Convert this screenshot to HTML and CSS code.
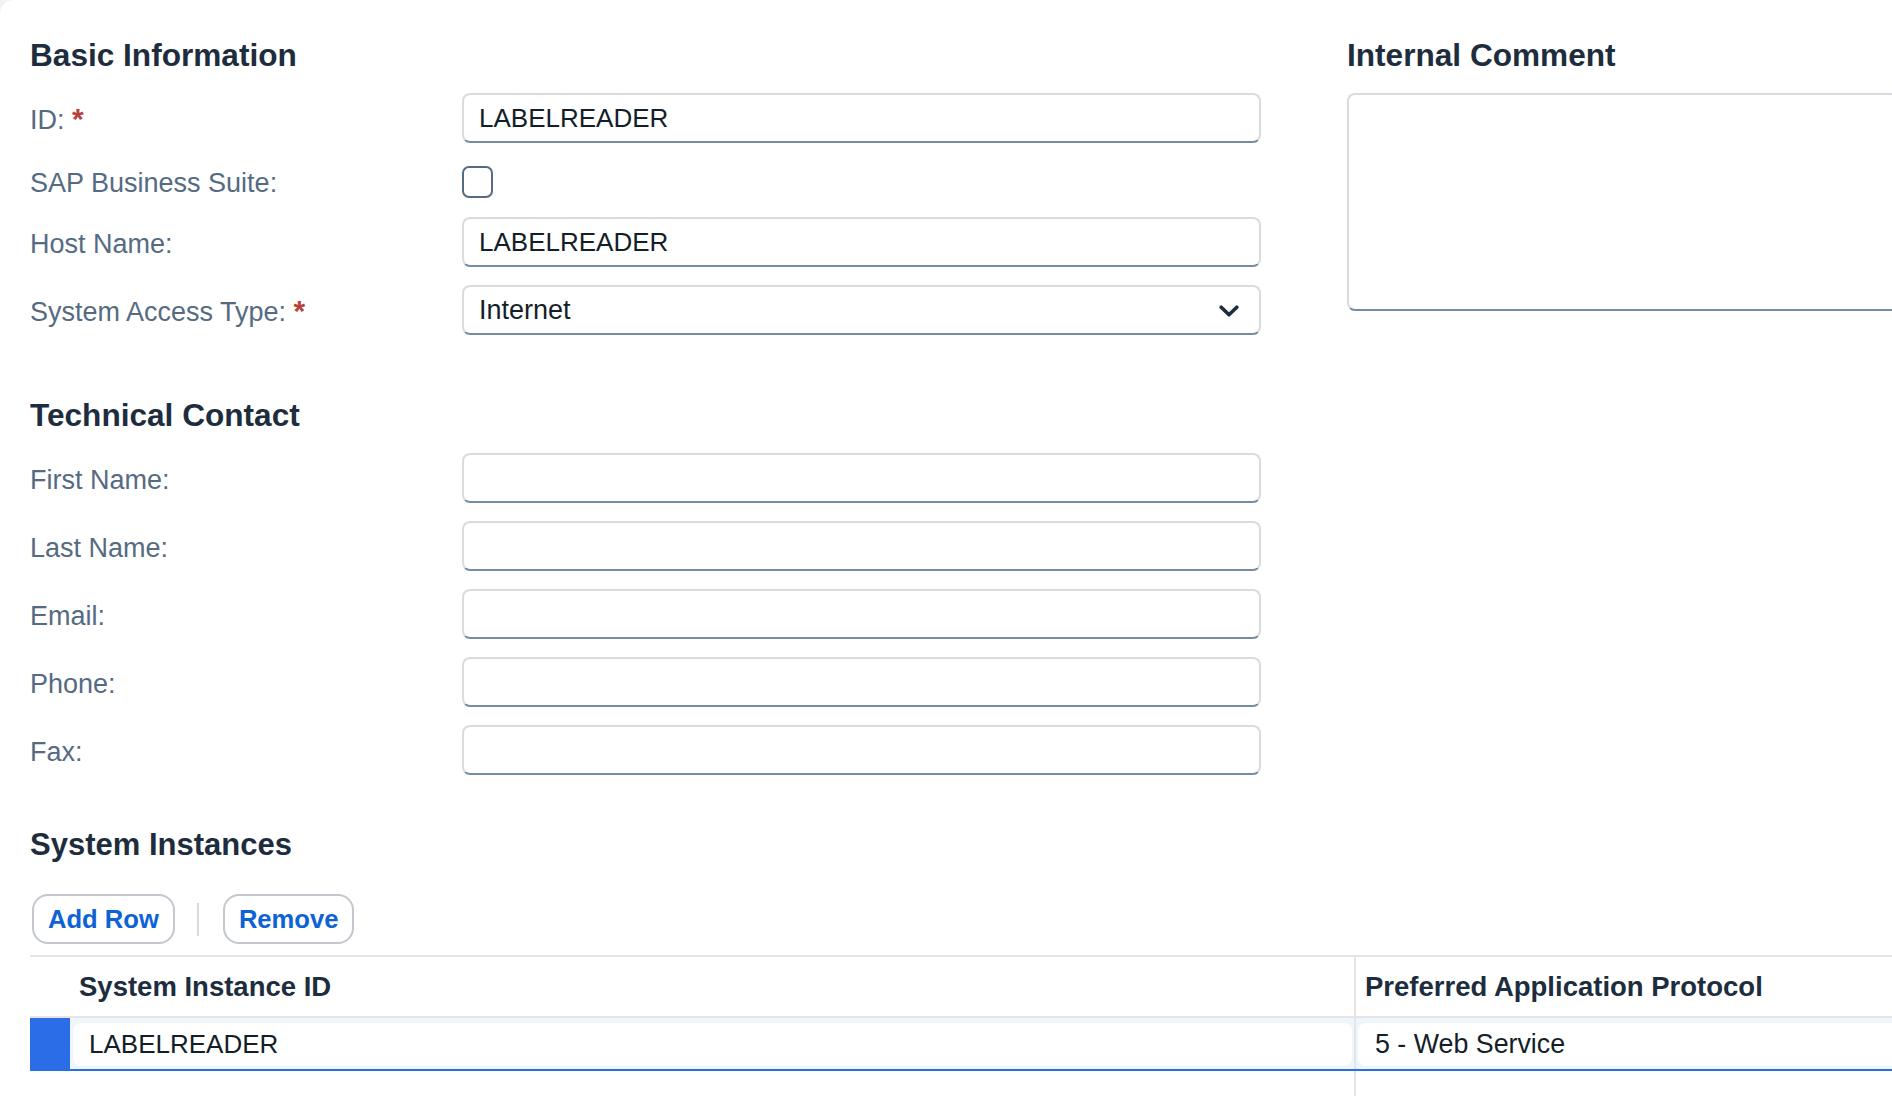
FILE: index.html
```html
<!DOCTYPE html>
<html lang="en">
<head>
<meta charset="utf-8">
<title>System Details</title>
<link rel="stylesheet" href="styles.css">
</head>
<body>
<div class="page">
  <div class="top">
    <div class="left">
      <section class="section">
        <h2 class="title">Basic Information</h2>
        <div class="fields">
          <div class="row">
            <label class="label">ID: <span class="req">*</span></label>
            <div class="input">LABELREADER</div>
          </div>
          <div class="row row-check">
            <label class="label">SAP Business Suite:</label>
            <div class="checkbox"></div>
          </div>
          <div class="row">
            <label class="label">Host Name:</label>
            <div class="input">LABELREADER</div>
          </div>
          <div class="row">
            <label class="label">System Access Type: <span class="req">*</span></label>
            <div class="input select">
              <span>Internet</span>
              <svg class="chevron" width="20" height="12" viewBox="0 0 20 12" aria-hidden="true"><path d="M2.2 2.2 L10 9.8 L17.8 2.2" fill="none" stroke="#1d2d3e" stroke-width="3.6" stroke-linecap="round" stroke-linejoin="round"/></svg>
            </div>
          </div>
        </div>
      </section>

      <section class="section section-tech">
        <h2 class="title">Technical Contact</h2>
        <div class="fields">
          <div class="row"><label class="label">First Name:</label><div class="input"></div></div>
          <div class="row"><label class="label">Last Name:</label><div class="input"></div></div>
          <div class="row"><label class="label">Email:</label><div class="input"></div></div>
          <div class="row"><label class="label">Phone:</label><div class="input"></div></div>
          <div class="row"><label class="label">Fax:</label><div class="input"></div></div>
        </div>
      </section>
    </div>

    <div class="right">
      <h2 class="title">Internal Comment</h2>
      <div class="textarea"></div>
    </div>
  </div>

  <section class="instances">
    <h2 class="title">System Instances</h2>
    <div class="toolbar">
      <button class="btn">Add Row</button>
      <span class="sep"></span>
      <button class="btn">Remove</button>
    </div>
    <div class="table">
      <div class="trow thead">
        <div class="cell sel"></div>
        <div class="cell c1">System Instance ID</div>
        <div class="cell c2">Preferred Application Protocol</div>
      </div>
      <div class="trow tbody selected">
        <div class="cell sel"></div>
        <div class="cell c1"><div class="val">LABELREADER</div></div>
        <div class="cell c2"><div class="val">5 - Web Service</div></div>
      </div>
      <div class="trow filler">
        <div class="cell sel"></div>
        <div class="cell c1"></div>
        <div class="cell c2"></div>
      </div>
    </div>
  </section>
</div>
</body>
</html>
```

FILE: styles.css
```css
html, body {
  margin: 0;
  padding: 0;
  overflow: hidden;
}

body {
  background: #f2f3f4;
  font-family: "Liberation Sans", Arial, sans-serif;
}

.page {
  background: #ffffff;
  border-top-left-radius: 14px;
  width: 2300px;
  height: 1096px;
  box-sizing: border-box;
  padding: 37px 0 0 30px;
}

.top {
  display: flex;
  gap: 86px;
}

.left {
  width: 1231px;
  flex: none;
}

.right {
  width: 1000px;
  flex: none;
}

.title {
  margin: 0;
  font-size: 31.6px;
  line-height: 36px;
  font-weight: 700;
  color: #1d2d3e;
}

.instances .title {
  font-size: 31px;
}

.section-tech {
  margin-top: 62px;
}

.fields {
  display: flex;
  flex-direction: column;
  gap: 18px;
  margin-top: 20px;
}

.row {
  display: grid;
  grid-template-columns: 432px 799px;
  align-items: center;
}

.row-check {
  height: 38px;
  box-sizing: border-box;
  padding-top: 4px;
}

.label {
  font-size: 27px;
  line-height: 32px;
  color: #556b82;
  padding-top: 4px;
}

.row-check .label {
  padding-top: 2px;
}

.req {
  color: #b6413b;
  font-weight: 700;
  font-size: 30px;
  line-height: 0;
}

.input {
  height: 50px;
  box-sizing: border-box;
  border: 2px solid #d7dce1;
  border-bottom-color: #758ca4;
  border-radius: 8px;
  background: #fff;
  padding: 0 15px;
  display: flex;
  align-items: center;
  font-size: 26px;
  color: #131e29;
}

.select {
  justify-content: space-between;
  padding-right: 20px;
}

.select span {
  font-size: 27px;
}

.chevron {
  display: block;
  margin-top: 2px;
}

.checkbox {
  width: 31px;
  height: 32px;
  box-sizing: border-box;
  border: 2px solid #556b82;
  border-radius: 7px;
  background: #fff;
}

.textarea {
  margin-top: 20px;
  height: 218px;
  box-sizing: border-box;
  border: 2px solid #d7dce1;
  border-bottom-color: #758ca4;
  border-radius: 8px;
  background: #fff;
}

.instances {
  margin-top: 52px;
}

.toolbar {
  display: flex;
  align-items: center;
  margin-top: 31px;
  padding-left: 2px;
  gap: 22px;
}

.btn {
  height: 50px;
  box-sizing: border-box;
  border: 2px solid #c2c8ce;
  border-radius: 16px;
  background: #fff;
  padding: 0 14px;
  font-family: "Liberation Sans", Arial, sans-serif;
  font-weight: 700;
  font-size: 25.6px;
  color: #0d62d6;
}

.sep {
  width: 2px;
  height: 33px;
  background: #d9d9d9;
  margin-right: 2px;
}

.table {
  margin-top: 11px;
  width: 2200px;
  border-top: 2px solid #e5e5e5;
}

.trow {
  display: grid;
  grid-template-columns: 40px 1286px 1fr;
}

.cell {
  box-sizing: border-box;
}

.c1 {
  border-right: 2px solid #e5e5e5;
}

.thead {
  height: 61px;
  border-bottom: 2px solid #e5e5e5;
  box-sizing: border-box;
}

.thead .cell {
  display: flex;
  align-items: center;
  font-weight: 700;
  font-size: 27.5px;
  color: #1d2d3e;
  padding-left: 9px;
}

.thead .sel {
  padding: 0;
}

.tbody {
  height: 53px;
  box-sizing: border-box;
  background: #eef6fd;
  border-bottom: 2px solid #2a6de6;
}

.tbody .sel {
  background: #2a6de6;
  margin-bottom: -2px;
}

.tbody .c1 {
  padding: 5px 2px 3px 3px;
}

.tbody .c2 {
  padding: 5px 0 3px 2px;
}

.val {
  height: 100%;
  box-sizing: border-box;
  background: #fff;
  border-radius: 8px;
  display: flex;
  align-items: center;
  font-size: 26px;
  color: #131e29;
}

.c1 .val {
  padding-left: 16px;
}

.c2 .val {
  padding-left: 17px;
  font-size: 26.8px;
}

.filler {
  height: 40px;
}
```
